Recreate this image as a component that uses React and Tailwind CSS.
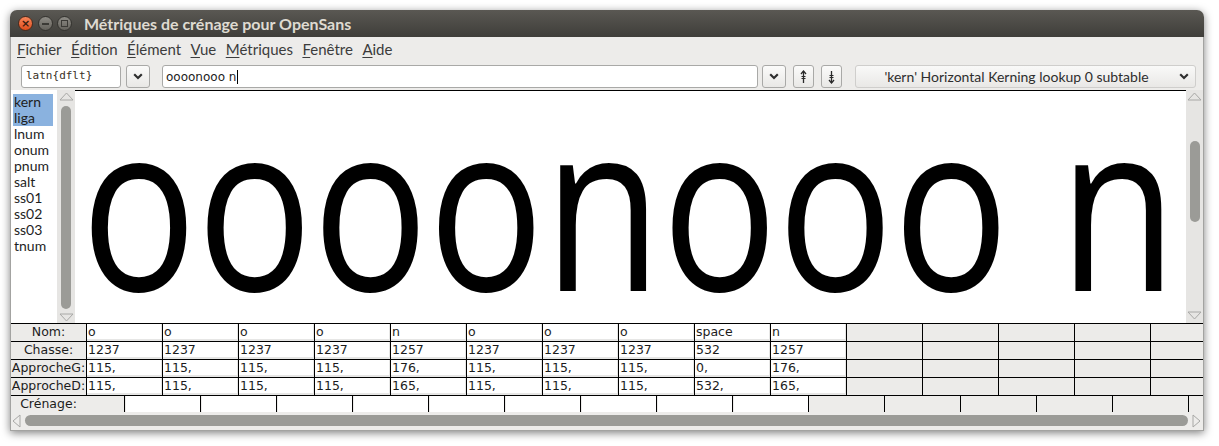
import React from "react";

const ui = { fontFamily: "Lato, 'Open Sans', sans-serif" };
const dv = { fontFamily: "'DejaVu Sans', sans-serif" };
const mono = { fontFamily: "'DejaVu Sans Mono', monospace" };

function Chevron() {
  return (
    <svg width="10" height="7" viewBox="0 0 10 7">
      <path d="M1.2 1.3 L5 5 L8.8 1.3" fill="none" stroke="#2e2e2e" strokeWidth="2.2" />
    </svg>
  );
}

function ArrowUpDbl({ down }) {
  return (
    <svg width="7" height="14" viewBox="0 0 7 14" style={down ? { transform: "scaleY(-1)" } : undefined}>
      <path d="M3.5 1 L3.5 13" stroke="#2a2a2a" strokeWidth="1.3" />
      <path d="M1 4 L3.5 1 L6 4" fill="none" stroke="#2a2a2a" strokeWidth="1.3" />
      <path d="M1.5 6.5 H5.5 M1.5 8.5 H5.5" stroke="#2a2a2a" strokeWidth="1" />
    </svg>
  );
}

function Tri({ dir }) {
  const paths = {
    up: "M1 8 L7.5 1 L14 8 Z",
    down: "M1 1 L7.5 8 L14 1 Z",
  };
  return (
    <svg width="15" height="9" viewBox="0 0 15 9">
      <path d={paths[dir]} fill="none" stroke="#a8a8a6" strokeWidth="1" />
    </svg>
  );
}

function TriH({ dir }) {
  const d = dir === "left" ? "M8 1 L1 7 L8 13 Z" : "M1 1 L8 7 L1 13 Z";
  return (
    <svg width="9" height="14" viewBox="0 0 9 14">
      <path d={d} fill="none" stroke="#a8a8a6" strokeWidth="1" />
    </svg>
  );
}

function Btn({ w, children, ml }) {
  return (
    <div
      className={`${w} ${ml} h-[23px] rounded-[3px] border border-[#a9a9a7] bg-gradient-to-b from-[#fbfbfa] to-[#e9e8e6] flex items-center justify-center shrink-0`}
    >
      {children}
    </div>
  );
}

const names = ["o", "o", "o", "o", "n", "o", "o", "o", "space", "n"];
const chasse = ["1237", "1237", "1237", "1237", "1257", "1237", "1237", "1237", "532", "1257"];
const appG = ["115,", "115,", "115,", "115,", "176,", "115,", "115,", "115,", "0,", "176,"];
const appD = ["115,", "115,", "115,", "115,", "165,", "115,", "115,", "115,", "532,", "165,"];

function Row({ label, vals }) {
  const cells = [];
  for (let i = 0; i < 15; i++) {
    if (i < vals.length) {
      cells.push(
        <div key={i} className="bg-[#ecebe9] h-[17px]">
          <div className="h-full bg-white border-r border-b-2 border-[#e6e6e5] pl-px text-[12.5px] leading-[15px] text-[#1c1c1c] overflow-hidden whitespace-nowrap">
            {vals[i]}
          </div>
        </div>
      );
    } else {
      cells.push(<div key={i} className="bg-[#ecebe9] h-[17px]" />);
    }
  }
  return (
    <>
      <div className="bg-[#ecebe9] h-[17px] text-center text-[12.5px] leading-[16px] text-[#1c1c1c] whitespace-nowrap overflow-hidden">
        {label}
      </div>
      {cells}
    </>
  );
}

export default function App() {
  const menu = ["Fichier", "Édition", "Élément", "Vue", "Métriques", "Fenêtre", "Aide"];
  const features = ["kern", "liga", "lnum", "onum", "pnum", "salt", "ss01", "ss02", "ss03", "tnum"];
  return (
    <div className="w-[1219px] h-[446px] bg-white pt-[10px] pl-[10px] overflow-hidden">
      <div className="w-[1194px] h-[421px] flex flex-col rounded-t-[7px] shadow-[0_2px_9px_rgba(0,0,0,0.5)] bg-[#edecea]">
        {/* title bar */}
        <div className="h-[27px] shrink-0 rounded-t-[7px] bg-gradient-to-b from-[#5a5853] to-[#3f3e3a] flex items-center pl-[8px]">
          <div className="w-[15px] h-[15px] rounded-full bg-gradient-to-b from-[#f7865a] to-[#de4c17] border border-[#4a2a1c] flex items-center justify-center">
            <span className="text-[11px] leading-none font-bold text-[#3a1c0f]" style={dv}>×</span>
          </div>
          <div className="ml-[5px] w-[15px] h-[15px] rounded-full bg-gradient-to-b from-[#8e8c86] to-[#64625c] border border-[#34332f] flex items-center justify-center">
            <div className="w-[7px] h-[2px] bg-[#3b3a36]" />
          </div>
          <div className="ml-[4px] w-[15px] h-[15px] rounded-full bg-gradient-to-b from-[#8e8c86] to-[#64625c] border border-[#34332f] flex items-center justify-center">
            <div className="w-[7px] h-[7px] border-[1.5px] border-[#3b3a36]" />
          </div>
          <div className="ml-[12px] text-[16px] font-bold text-[#dfdbd2] leading-none" style={ui}>
            Métriques de crénage pour OpenSans
          </div>
        </div>

        <div className="flex-1 flex flex-col border-x border-b border-[#a3a3a1]">
          {/* menu */}
          <div className="h-[25px] shrink-0 flex items-center pl-[6px] gap-[9.5px] text-[15px] text-[#3c3c3c]" style={ui}>
            {menu.map((m) => (
              <span key={m}>
                <span className="underline underline-offset-2">{m[0]}</span>
                {m.slice(1)}
              </span>
            ))}
          </div>

          {/* toolbar */}
          <div className="h-[28px] shrink-0 flex items-start pt-[3px] pl-[10px]">
            <div className="w-[100px] h-[23px] rounded-[3px] border border-[#a9a9a7] bg-white pl-[4px] flex items-center text-[11px] text-[#3a3026]" style={mono}>
              latn{"{"}dflt{"}"}
            </div>
            <Btn w="w-[24px]" ml="ml-[5px]"><Chevron /></Btn>
            <div className="ml-[12px] w-[596px] h-[23px] rounded-[3px] border border-[#a9a9a7] bg-white pl-[3px] flex items-center text-[12px] text-[#222]" style={dv}>
              <span className="whitespace-pre">oooonooo n</span>
              <span className="ml-px w-px h-[14px] bg-black" />
            </div>
            <Btn w="w-[24px]" ml="ml-[4px]"><Chevron /></Btn>
            <Btn w="w-[21px]" ml="ml-[7px]"><ArrowUpDbl /></Btn>
            <Btn w="w-[21px]" ml="ml-[7px]"><ArrowUpDbl down /></Btn>
            <div className="ml-[13px] w-[341px] h-[23px] rounded-[3px] border border-[#cfcecc] bg-gradient-to-b from-[#f9f9f8] to-[#e9e8e6] flex items-center text-[14px] text-[#2e2e2e]" style={ui}>
              <div className="flex-1 text-center whitespace-nowrap pl-[4px]">'kern' Horizontal Kerning lookup 0 subtable</div>
              <div className="w-[22px] flex justify-center"><Chevron /></div>
            </div>
          </div>

          {/* main area */}
          <div className="h-[233px] shrink-0 flex">
            <div className="w-[46px] bg-white pt-[4px] text-[14px] leading-[16px] text-[#1e1e1e]" style={ui}>
              {features.map((f, i) => (
                <div key={f} className={`ml-[2px] w-[40px] pl-px ${i < 2 ? "bg-[#8ab2df]" : ""}`}>{f}</div>
              ))}
            </div>
            <div className="w-[18px] bg-[#e6e5e3] flex flex-col items-center">
              <div className="mt-[2px]"><Tri dir="up" /></div>
              <div className="mt-[5px] w-[10px] h-[203px] rounded-full bg-[#9b9b97]" />
              <div className="mt-[4px]"><Tri dir="down" /></div>
            </div>
            <div className="flex-1 bg-white border-t border-black overflow-hidden pl-[6px]">
              <span
                className="inline-block origin-left scale-x-[0.822] whitespace-pre text-[234px] leading-[220px] text-black"
                style={{ fontFamily: "'Open Sans', sans-serif" }}
              >
                oooonooo n
              </span>
            </div>
            <div className="w-[17px] bg-[#e6e5e3] flex flex-col items-center">
              <div className="mt-[2px]"><Tri dir="up" /></div>
              <div className="mt-[40px] w-[10px] h-[81px] rounded-full bg-[#9b9b97]" />
              <div className="mt-auto mb-[3px]"><Tri dir="down" /></div>
            </div>
          </div>

          {/* table */}
          <div className="grid grid-cols-[75px_repeat(14,75px)_1fr] gap-px bg-black py-px" style={dv}>
            <Row label="Nom:" vals={names} />
            <Row label="Chasse:" vals={chasse} />
            <Row label="ApprocheG:" vals={appG} />
            <Row label="ApprocheD:" vals={appD} />
          </div>

          {/* crénage */}
          <div className="h-[17px] shrink-0 flex" style={dv}>
            <div className="w-[75px] text-center text-[12.5px] leading-[16px] text-[#1c1c1c]">Crénage:</div>
            <div className="w-[38px]" />
            {Array.from({ length: 14 }).map((_, i) => (
              <div key={i} className="w-[76px] h-[16px] border-l border-black pl-px shrink-0">
                <div className={`h-full ${i < 9 ? "bg-white" : ""}`} />
              </div>
            ))}
            <div className="w-[15px] h-[16px] border-l border-black" />
          </div>

          {/* horizontal scrollbar */}
          <div className="h-[15px] shrink-0 flex items-center pl-px">
            <TriH dir="left" />
            <div className="ml-[4px] w-[1163px] h-[11px] rounded-full bg-[#9b9b97]" />
            <div className="ml-[4px]"><TriH dir="right" /></div>
          </div>
        </div>
      </div>
    </div>
  );
}
